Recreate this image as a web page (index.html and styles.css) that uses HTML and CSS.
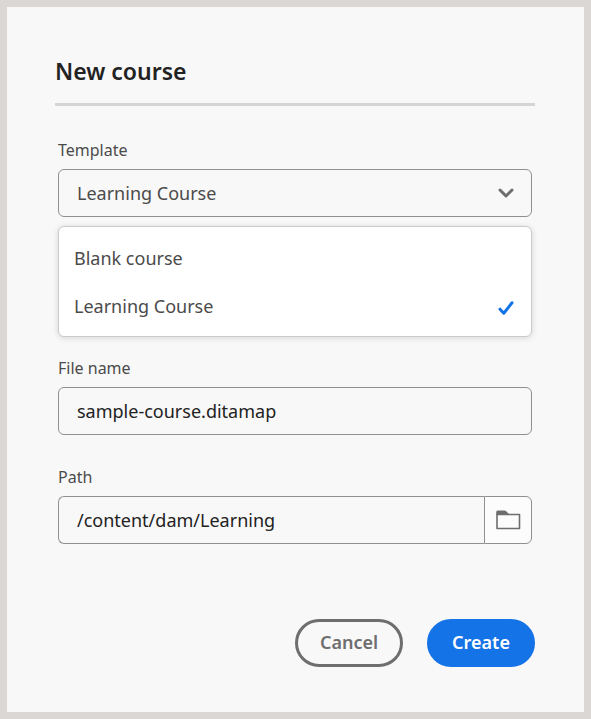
FILE: index.html
```html
<!DOCTYPE html>
<html lang="en">
<head>
<meta charset="utf-8">
<meta name="viewport" content="width=device-width, initial-scale=1">
<title>New course</title>
<link rel="stylesheet" href="styles.css">
</head>
<body>
<main class="dialog">
  <h1 class="title">New course</h1>
  <form class="form">
    <div class="field">
      <label class="label" for="template">Template</label>
      <div class="picker">
        <select class="control select" id="template">
          <option>Blank course</option>
          <option selected>Learning Course</option>
        </select>
        <svg class="chevron" viewBox="0 0 16 10" aria-hidden="true"><path d="M2 2l6 6 6-6"/></svg>
      </div>
      <ul class="menu" role="listbox" aria-label="Template">
        <li class="option" role="option" aria-selected="false">Blank course</li>
        <li class="option" role="option" aria-selected="true">Learning Course
          <svg class="check" viewBox="0 0 16 14" aria-hidden="true"><path d="M2 8.2l3.800 4L14 1.800"/></svg>
        </li>
      </ul>
    </div>
    <div class="field">
      <label class="label" for="filename">File name</label>
      <input class="control" id="filename" type="text" value="sample-course.ditamap">
    </div>
    <div class="field">
      <label class="label" for="path">Path</label>
      <div class="path">
        <input class="control path-input" id="path" type="text" value="/content/dam/Learning">
        <button class="browse" type="button" aria-label="Browse">
          <svg class="folder" viewBox="0 0 26 20" aria-hidden="true"><path class="folder-body" d="M2 4.500h22.500v14H2z"/><path class="folder-tab" d="M1.200 5V2Q1.200 .5 2.700 .5H9.500Q10.500 .5 11.200 1.200L14 4v1z"/></svg>
        </button>
      </div>
    </div>
    <div class="actions">
      <button class="button cancel" type="button">Cancel</button>
      <button class="button create" type="submit">Create</button>
    </div>
  </form>
</main>
</body>
</html>
```
FILE: styles.css
```css
* {
  box-sizing: border-box;
}

body {
  margin: 0;
  padding: 7px;
  background: #dbd7d4;
  color: #4b4b4b;
  font-family: "Noto Sans", "Open Sans", sans-serif;
  font-size: 18px;
}

.dialog {
  padding: 45px 49px 45px 48px;
  background: #f8f8f8;
}

.title {
  margin: 0;
  padding-bottom: 12px;
  border-bottom: 3px solid #d5d5d5;
  color: #222;
  font-size: 23px;
  font-weight: 600;
  line-height: 39px;
}

.form {
  padding-top: 32px;
}

.field {
  margin: 0 3px 30px;
}

.field:first-child {
  margin-bottom: 19px;
}

.label {
  display: block;
  margin-bottom: 7px;
  font-size: 16px;
  line-height: 24px;
}

.control {
  display: block;
  width: 100%;
  height: 48px;
  padding: 0 18px;
  border: 1px solid #909090;
  border-radius: 6px;
  background: #f8f8f8;
  color: #222;
  font: inherit;
}

.picker {
  position: relative;
}

.select {
  appearance: none;
  color: #4b4b4b;
}

.chevron {
  position: absolute;
  top: 19px;
  right: 18px;
  width: 16px;
  height: 10px;
  fill: none;
  stroke: #6e6e6e;
  stroke-width: 3;
  stroke-linecap: round;
  stroke-linejoin: round;
  pointer-events: none;
}

.menu {
  margin: 9px 0 0;
  padding: 7px 15px 6px;
  border: 1px solid #cacaca;
  border-radius: 6px;
  background: #fff;
  box-shadow: 0 1px 6px rgba(0, 0, 0, 0.14);
  list-style: none;
}

.option {
  display: flex;
  align-items: center;
  justify-content: space-between;
  height: 48px;
}

.check {
  width: 16px;
  height: 14px;
  margin: 4px 2px 0 0;
  fill: none;
  stroke: #1473e6;
  stroke-width: 3;
  stroke-linecap: round;
  stroke-linejoin: round;
}

.path {
  display: flex;
}

.path-input {
  flex: 1;
  min-width: 0;
  border-right: 0;
  border-radius: 6px 0 0 6px;
}

.browse {
  display: grid;
  place-items: center;
  width: 48px;
  padding: 0;
  border: 1px solid #909090;
  border-radius: 0 6px 6px 0;
  background: #fcfcfc;
}

.folder {
  width: 26px;
  height: 20px;
}

.folder-body {
  fill: #fcfcfc;
  stroke: #6e6e6e;
  stroke-width: 1.6;
  stroke-linejoin: round;
}

.folder-tab {
  fill: #6e6e6e;
}

.actions {
  display: flex;
  justify-content: flex-end;
  gap: 24px;
  padding-top: 45px;
}

.button {
  width: 108px;
  height: 48px;
  padding: 0 0 2px;
  border: 3px solid #6e6e6e;
  border-radius: 24px;
  background: transparent;
  color: #6e6e6e;
  font: inherit;
  font-weight: 600;
}

.create {
  border-color: #1473e6;
  background: #1473e6;
  color: #fff;
}
```
